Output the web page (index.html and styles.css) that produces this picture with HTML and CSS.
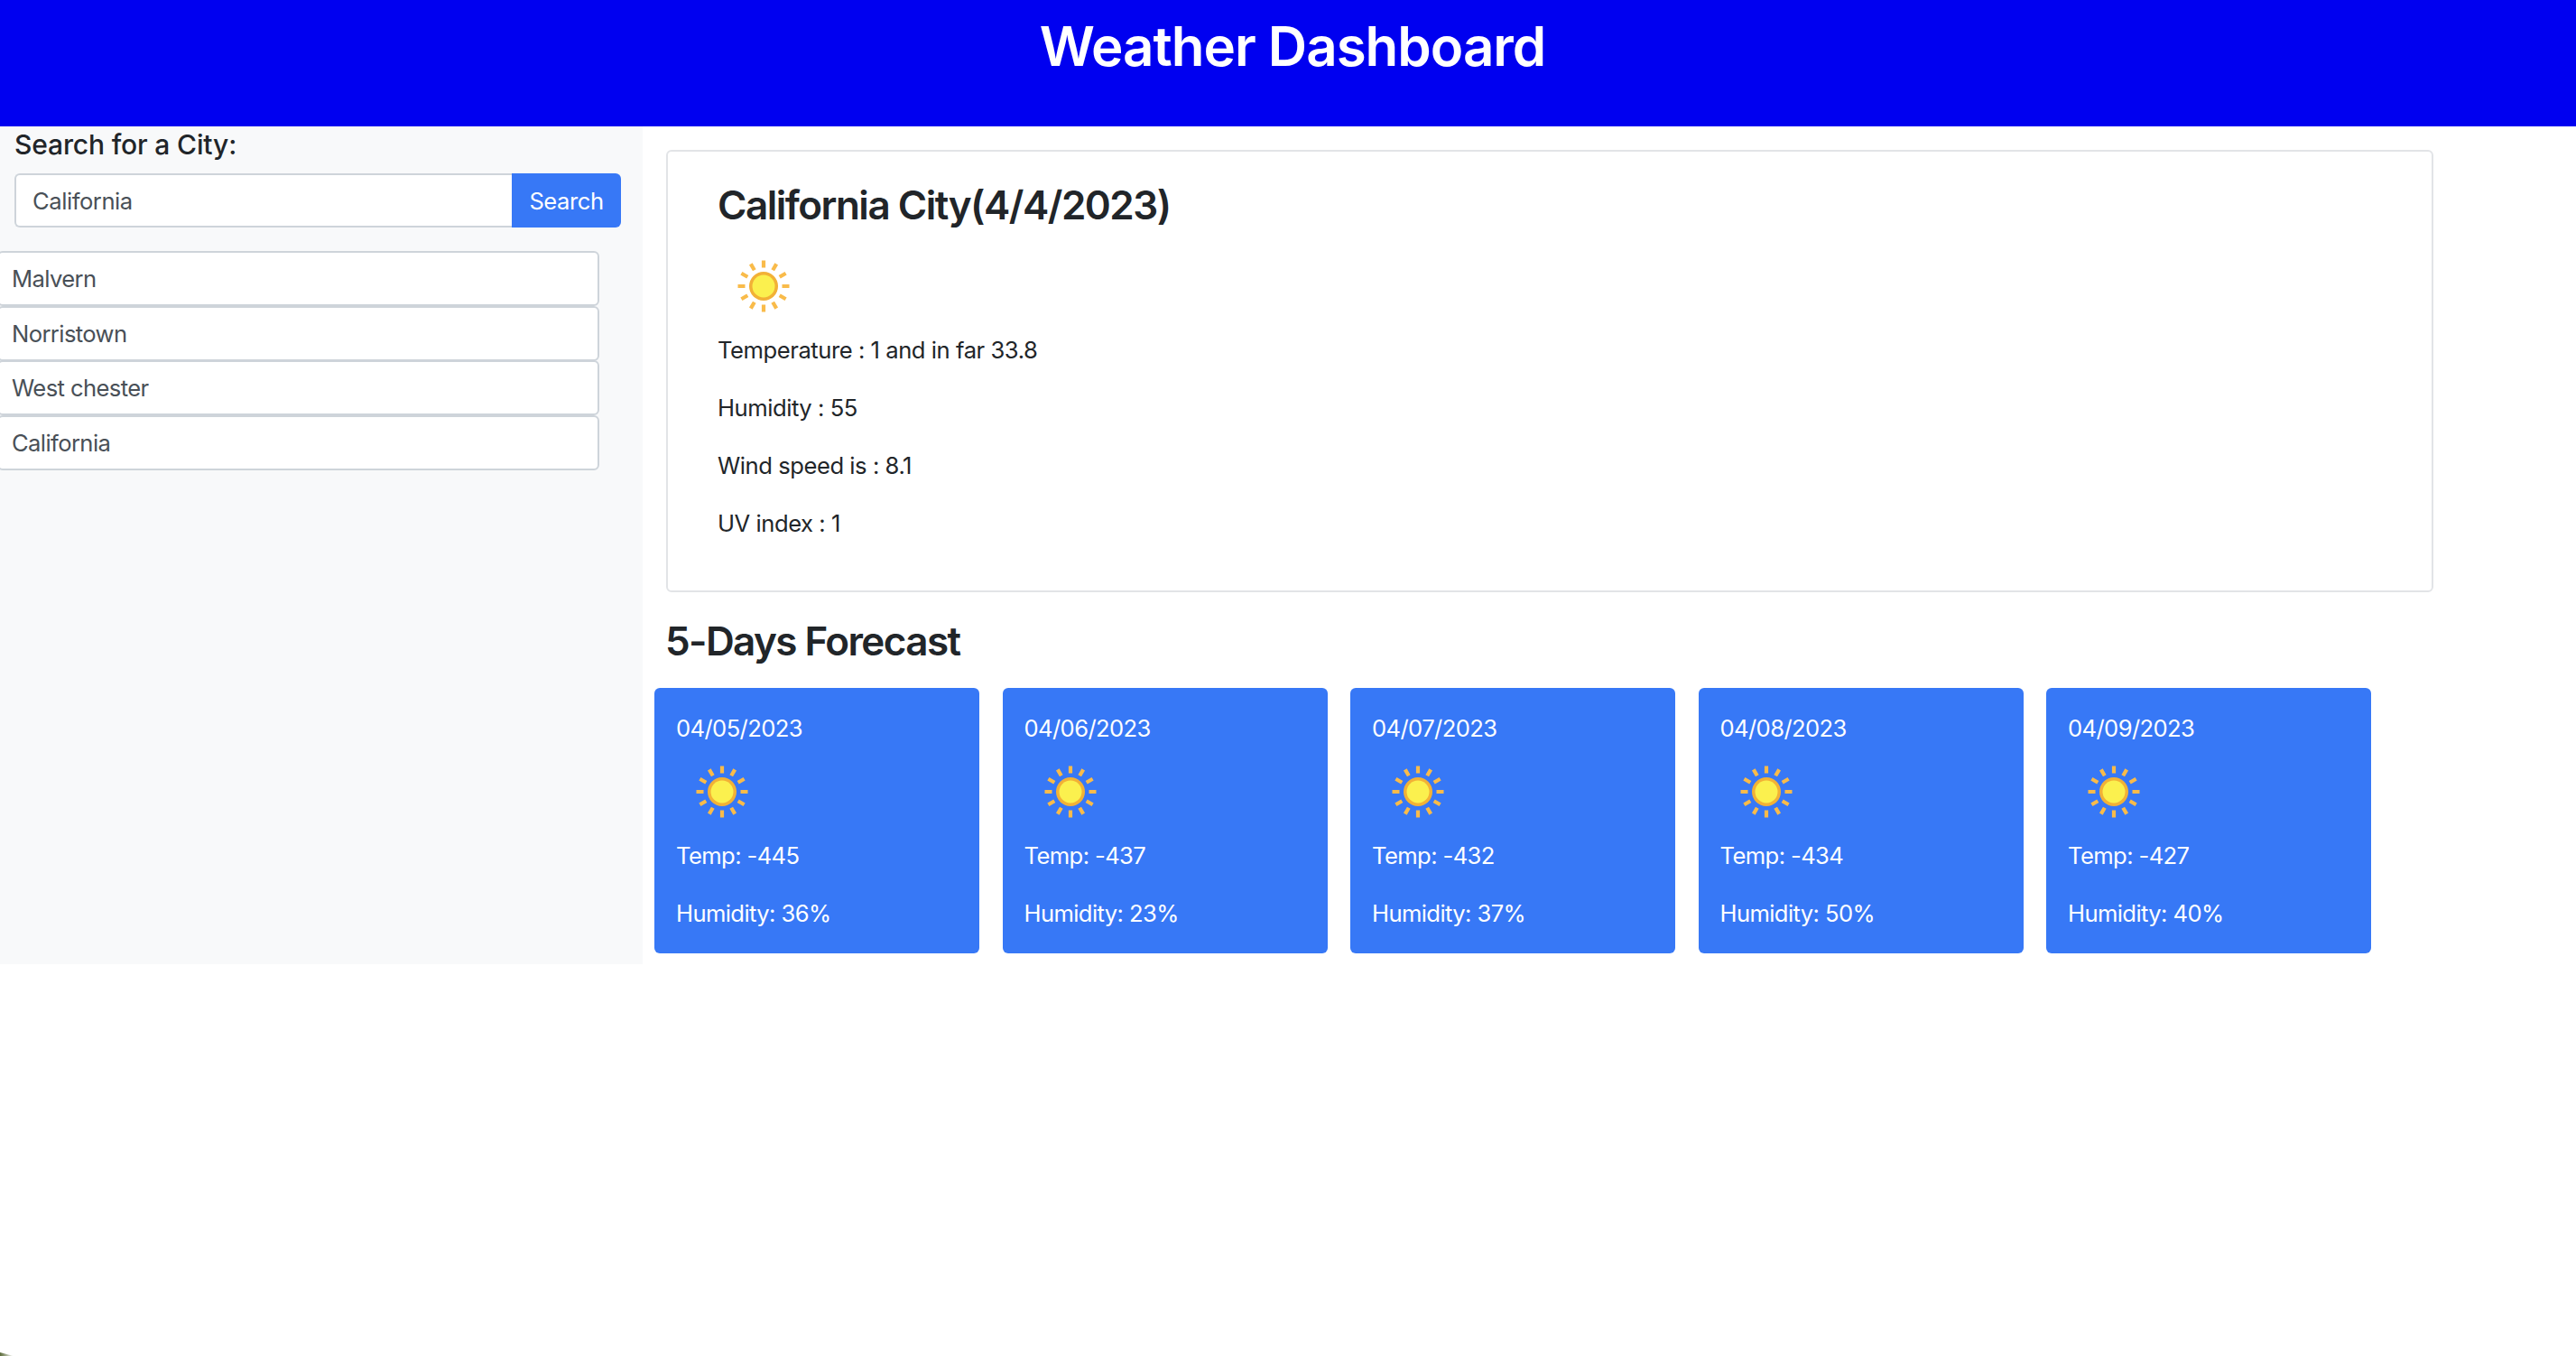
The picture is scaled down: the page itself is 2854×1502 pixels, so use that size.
FILE: index.html
```html
<!DOCTYPE html>
<html lang="en">
<head>
  <meta charset="UTF-8" />
  <title>Weather Dashboard</title>
  <link rel="stylesheet" href="styles.css">
</head>
<body>
  <svg class="sprite" width="0" height="0">
    <symbol id="sun" viewBox="0 0 100 100">
      <g stroke="#f9bb4a" stroke-width="4.200" stroke-linecap="butt">
        <path d="M50 21.500V29.500M50 70.500V78.500M21.500 50H29.500M70.500 50H78.500" />
        <path d="M35.800 25.400L39.800 32.300M60.200 67.700L64.200 74.600M25.400 35.800L32.300 39.800M67.700 60.200L74.600 64.200" />
        <path d="M64.200 25.400L60.200 32.300M39.800 67.700L35.800 74.600M74.600 35.800L67.700 39.800M32.300 60.200L25.400 64.200" />
      </g>
      <circle cx="50" cy="50" r="16" fill="#f2b136" />
      <circle cx="50" cy="50" r="12.500" fill="#fbf04e" />
    </symbol>
  </svg>

  <header class="top-bar">
    <h1>Weather Dashboard</h1>
  </header>

  <div class="layout">
    <aside class="sidebar">
      <h2 class="search-title">Search for a City:</h2>
      <form class="search-group">
        <input class="search-input" type="text" value="California" />
        <button class="search-btn" type="button">Search</button>
      </form>
      <ul class="city-list">
        <li>Malvern</li>
        <li>Norristown</li>
        <li>West chester</li>
        <li>California</li>
      </ul>
    </aside>

    <main class="content">
      <section class="today-card">
        <h3>California City(4/4/2023)</h3>
        <svg class="weather-icon"><use href="#sun" /></svg>
        <p>Temperature : 1 and in far 33.8</p>
        <p>Humidity : 55</p>
        <p>Wind speed is : 8.1</p>
        <p>UV index : 1</p>
      </section>

      <h3 class="forecast-title">5-Days Forecast</h3>
      <div class="forecast-row">
        <div class="day-card">
          <div>04/05/2023</div>
          <svg class="weather-icon"><use href="#sun" /></svg>
          <p>Temp: -445</p>
          <p>Humidity: 36%</p>
        </div>
        <div class="day-card">
          <div>04/06/2023</div>
          <svg class="weather-icon"><use href="#sun" /></svg>
          <p>Temp: -437</p>
          <p>Humidity: 23%</p>
        </div>
        <div class="day-card">
          <div>04/07/2023</div>
          <svg class="weather-icon"><use href="#sun" /></svg>
          <p>Temp: -432</p>
          <p>Humidity: 37%</p>
        </div>
        <div class="day-card">
          <div>04/08/2023</div>
          <svg class="weather-icon"><use href="#sun" /></svg>
          <p>Temp: -434</p>
          <p>Humidity: 50%</p>
        </div>
        <div class="day-card">
          <div>04/09/2023</div>
          <svg class="weather-icon"><use href="#sun" /></svg>
          <p>Temp: -427</p>
          <p>Humidity: 40%</p>
        </div>
      </div>
    </main>
  </div>

  <div class="corner-mark"></div>
</body>
</html>
```

FILE: styles.css
```css
:root {
  --header-blue: #0000f0;
  --primary: #3778f6;
  --light-bg: #f8f9fa;
  --text-dark: #212529;
  --text-grey: #495057;
  --input-border: #ced4da;
  --card-border: #e2e4e7;
}
* {
  box-sizing: border-box;
}
body {
  margin: 0;
  font-family: Inter, "Noto Sans", sans-serif;
  font-size: 25.6px;
  line-height: 40px;
  letter-spacing: -0.450px;
  color: var(--text-dark);
  background: #fff;
  overflow-x: hidden;
}
.sprite {
  display: block;
  height: 0;
}
p {
  margin: 0 0 24px;
}
.top-bar {
  height: 140px;
  background: var(--header-blue);
  color: #fff;
  text-align: center;
  padding: 15px 0 0 10px;
}
.top-bar h1 {
  margin: 0;
  font-size: 60px;
  line-height: 72px;
  font-weight: 600;
  letter-spacing: -1px;
}
.layout {
  display: flex;
}
.sidebar {
  width: 712px;
  height: 928px;
  background: var(--light-bg);
}
.search-title {
  margin: 0;
  padding: 2px 0 0 16px;
  height: 52px;
  font-size: 30px;
  line-height: 36px;
  font-weight: 500;
  letter-spacing: -0.150px;
}
.search-group {
  display: flex;
  width: 672px;
  height: 60px;
  margin-left: 16px;
}
.search-input {
  flex: 1;
  min-width: 0;
  padding: 2px 18px 0;
  border: 2px solid var(--input-border);
  border-right: none;
  border-radius: 6px 0 0 6px;
  font: inherit;
  letter-spacing: -0.450px;
  color: var(--text-grey);
  background: #fff;
}
.search-btn {
  width: 121px;
  border: none;
  border-radius: 0 6px 6px 0;
  background: var(--primary);
  color: #fff;
  font: inherit;
  letter-spacing: -0.450px;
  padding: 2px 0 0;
}
.city-list {
  list-style: none;
  margin: 26px 0 0 -3px;
  padding: 0;
  width: 667px;
}
.city-list li {
  height: 61px;
  margin-bottom: -0.500px;
  padding: 9px 0 0 14px;
  background: #fff;
  border: 2px solid var(--input-border);
  border-radius: 6px;
  color: var(--text-grey);
  letter-spacing: -0.600px;
}
.content {
  flex: 1;
}
.today-card {
  width: 1958px;
  height: 490px;
  margin: 26px 0 0 26px;
  padding: 32px 55px 0;
  border: 2px solid var(--card-border);
  border-radius: 6px;
}
.today-card h3 {
  margin: 0 0 13px;
  font-size: 44px;
  line-height: 54px;
  font-weight: 600;
  letter-spacing: -1.500px;
}
.weather-icon {
  display: block;
  width: 100px;
  height: 100px;
  margin-left: 1px;
  filter: blur(0.400px);
}
.today-card .weather-icon {
  margin-bottom: 1px;
}
.forecast-title {
  margin: 27px 0 25px 25px;
  font-size: 44px;
  line-height: 54px;
  font-weight: 600;
  letter-spacing: -1.600px;
}
.forecast-row {
  display: flex;
  gap: 25.500px;
  margin-left: 13px;
}
.day-card {
  width: 360px;
  height: 294px;
  padding: 25px 24px 0;
  background: var(--primary);
  border-radius: 6px;
  color: #fff;
  letter-spacing: -0.600px;
}
.day-card p:first-of-type {
  margin-top: 1px;
}
.corner-mark {
  position: fixed;
  left: 0;
  bottom: 0;
  width: 15px;
  height: 4px;
  background: linear-gradient(90deg, #5b6b3a, #ffffff);
  clip-path: polygon(0 0, 100% 100%, 0 100%);
}
```
